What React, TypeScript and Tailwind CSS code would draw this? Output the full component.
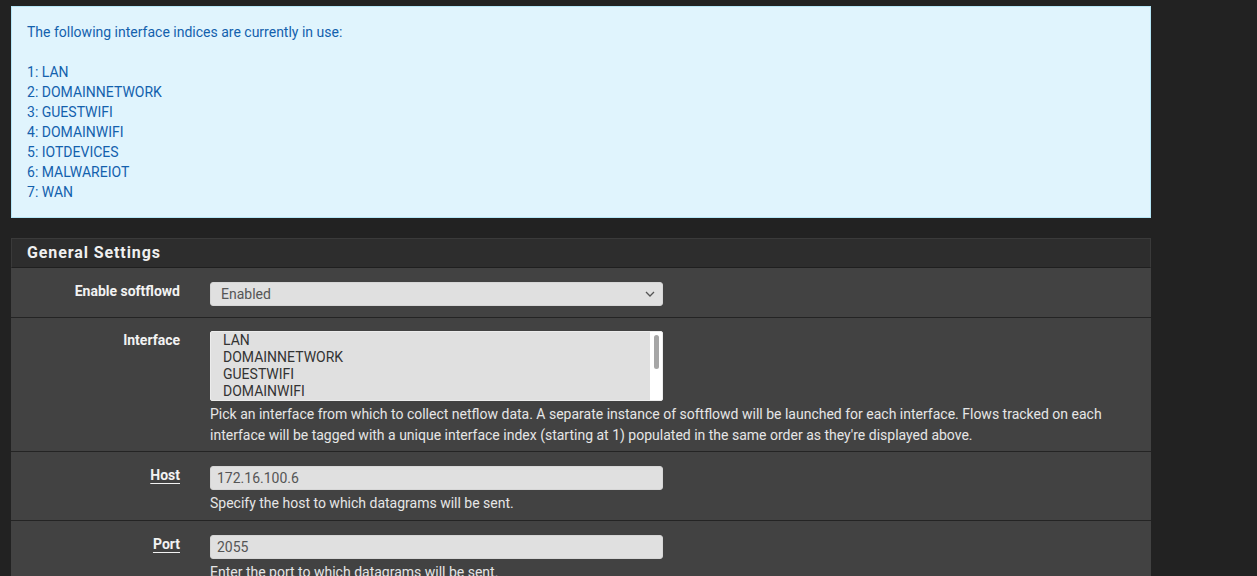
import React from 'react';

const indices = ['LAN', 'DOMAINNETWORK', 'GUESTWIFI', 'DOMAINWIFI', 'IOTDEVICES', 'MALWAREIOT', 'WAN'];

const Label: React.FC<{ text: string; underline?: boolean }> = ({ text, underline }) => (
    <div className="w-[169px] shrink-0 -mt-[1px] text-right text-[14px] leading-[20px] font-bold text-[#f2f2f2]">
        <span className={underline ? 'underline underline-offset-[3px]' : ''}>{text}</span>
    </div>
);

const Help: React.FC<{ children: React.ReactNode }> = ({ children }) => (
    <p className="mt-[3px] text-[14px] leading-[21px] text-[#e6e6e6]">{children}</p>
);

const TextInput: React.FC<{ value: string }> = ({ value }) => (
    <div className="w-[453px] h-[24px] rounded-[3px] bg-[#e0e0e0] border border-[#d6d6d6] pl-[6px] text-[14px] leading-[22px] text-[#555]">
        {value}
    </div>
);

export default function App() {
    return (
        <div className="min-h-[576px] bg-[#222222] pt-[6px] pl-[11px] font-['Roboto',sans-serif]" style={{ width: 1257 }}>
            <div className="w-[1140px]">

                {/* Info alert */}
                <div className="bg-[#e0f4fd] border border-[#b6e6f7] px-[15px] py-[15px] text-[14px] leading-[20px] text-[#1361ad]">
                    <p>The following interface indices are currently in use:</p>
                    <p>&nbsp;</p>
                    {indices.map((name, i) => (
                        <p key={name}>{i + 1}: {name}</p>
                    ))}
                </div>

                {/* General Settings panel */}
                <div className="mt-[20px]">
                    <div className="h-[30px] bg-[#2d2d2d] border border-[#3a3a3a] border-b-[#1f1f1f] pl-[15px] flex items-center">
                        <h2 className="text-[16px] font-bold tracking-[0.9px] text-[#f0f0f0]">General Settings</h2>
                    </div>

                    {/* Enable softflowd */}
                    <div className="bg-[#424242] border-b border-[#242424] flex gap-[30px] pt-[14px] pb-[11px]">
                        <Label text="Enable softflowd" />
                        <div className="w-[453px] h-[24px] rounded-[3px] bg-[#e0e0e0] border border-[#d6d6d6] pl-[10px] pr-[7px] flex items-center justify-between text-[14px] text-[#555]">
                            <span>Enabled</span>
                            <svg width="10" height="6" viewBox="0 0 10 6" fill="none">
                                <path d="M1 1l4 4 4-4" stroke="#555" strokeWidth="1.3" />
                            </svg>
                        </div>
                    </div>

                    {/* Interface */}
                    <div className="bg-[#424242] border-b border-[#242424] flex gap-[30px] pt-[13px] pb-[5px]">
                        <Label text="Interface" />
                        <div className="flex-1 pr-[40px]">
                            <div className="w-[453px] h-[70px] flex bg-[#e0e0e0] border border-[#ececec] rounded-[2px] overflow-hidden">
                                <div className="flex-1 pl-[12px] text-[14px] leading-[17px] text-[#333]">
                                    {indices.slice(0, 4).map((n) => (
                                        <div key={n}>{n}</div>
                                    ))}
                                </div>
                                <div className="w-[12px] bg-white flex justify-center pt-[3px]">
                                    <div className="w-[5px] h-[34px] rounded-full bg-[#a6a6a6]" />
                                </div>
                            </div>
                            <Help>
                                Pick an interface from which to collect netflow data. A separate instance of softflowd will be launched for each interface. Flows tracked on each interface will be tagged with a unique interface index (starting at 1) populated in the same order as they're displayed above.
                            </Help>
                        </div>
                    </div>

                    {/* Host */}
                    <div className="bg-[#424242] border-b border-[#242424] flex gap-[30px] pt-[14px] pb-[6px]">
                        <Label text="Host" underline />
                        <div className="flex-1">
                            <TextInput value="172.16.100.6" />
                            <Help>Specify the host to which datagrams will be sent.</Help>
                        </div>
                    </div>

                    {/* Port */}
                    <div className="bg-[#424242] border-b border-[#242424] flex gap-[30px] pt-[14px] pb-[6px]">
                        <Label text="Port" underline />
                        <div className="flex-1">
                            <TextInput value="2055" />
                            <Help>Enter the port to which datagrams will be sent.</Help>
                        </div>
                    </div>
                </div>
            </div>
        </div>
    );
}
